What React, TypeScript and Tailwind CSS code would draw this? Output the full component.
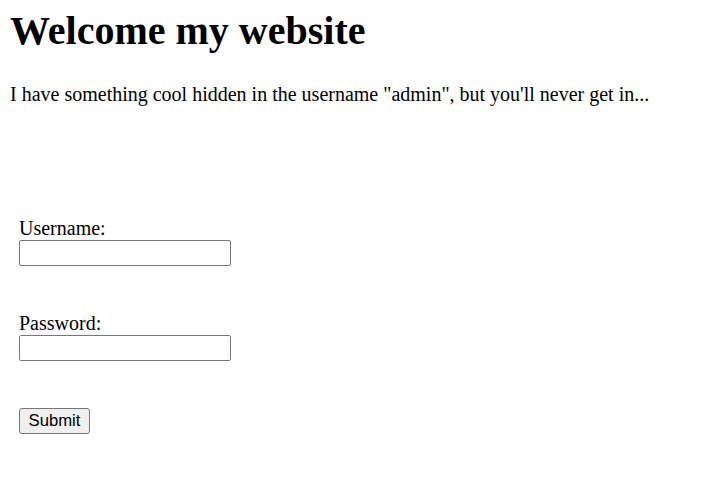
export default function App() {
  return (
    <div className="min-h-[496px] bg-white text-black font-['Liberation_Serif','Times_New_Roman',serif]">
      <div className="px-[10px] pt-[8px]">
        <h1 className="text-[40px] font-bold leading-[46px]">Welcome my website</h1>
        <p className="mt-[29px] text-[20px] leading-[23px]">
          I have something cool hidden in the username "admin", but you'll never get in...
        </p>
      </div>

      <form className="pl-[19px] pt-[111px]" onSubmit={(e) => e.preventDefault()}>
        <label className="block text-[20px] leading-[23px]">Username:</label>
        <input
          type="text"
          name="username"
          className="block w-[212px] h-[26px] border border-[#767676] rounded-[2px] bg-white px-1 outline-none"
        />

        <label className="block mt-[46px] text-[20px] leading-[23px]">Password:</label>
        <input
          type="password"
          name="password"
          className="block w-[212px] h-[26px] border border-[#767676] rounded-[2px] bg-white px-1 outline-none"
        />

        <button
          type="submit"
          className="mt-[47px] flex items-center justify-center w-[71px] h-[26px] border border-[#767676] rounded-[3px] bg-[#efefef] text-[16.67px] leading-none font-['Liberation_Sans',Arial,sans-serif]"
        >
          Submit
        </button>
      </form>
    </div>
  );
}
